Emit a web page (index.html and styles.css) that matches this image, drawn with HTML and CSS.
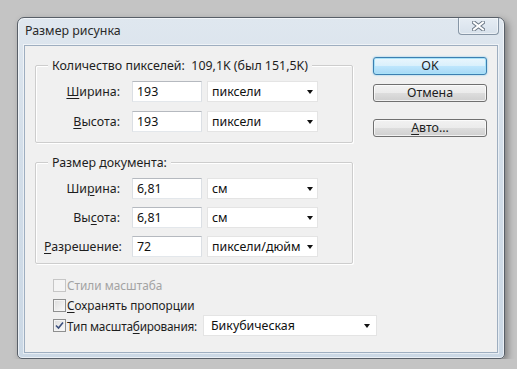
FILE: index.html
```html
<!DOCTYPE html>
<html lang="ru">
<head>
    <meta charset="UTF-8">
    <title>Размер рисунка</title>
    <link rel="stylesheet" href="styles.css">
</head>
<body>

<div class="desktop">
    <div class="window">
        <div class="titlebar">
            <span class="title">Размер рисунка</span>
            <span class="close">
                <svg width="13" height="10" viewBox="0 0 13 10">
                    <path d="M2 1.5 L11 8.5 M11 1.5 L2 8.5" stroke="#6b7886" stroke-width="4" stroke-linecap="square" fill="none"/>
                    <path d="M2 1.5 L11 8.5 M11 1.5 L2 8.5" stroke="#ffffff" stroke-width="2" stroke-linecap="square" fill="none"/>
                </svg>
            </span>
        </div>

        <div class="client">
            <div class="main">
                <div class="group">
                    <div class="group-title">Количество пикселей:&nbsp; 109,1K (был 151,5K)</div>
                    <div class="fields">
                        <span class="field-label"><u>Ш</u>ирина:</span>
                        <span class="input">193</span>
                        <span class="select">пиксели<span class="arrow"></span></span>

                        <span class="field-label"><u>В</u>ысота:</span>
                        <span class="input">193</span>
                        <span class="select">пиксели<span class="arrow"></span></span>
                    </div>
                </div>

                <div class="group group-doc">
                    <div class="group-title">Размер документа:</div>
                    <div class="fields">
                        <span class="field-label">Ши<u>р</u>ина:</span>
                        <span class="input">6,81</span>
                        <span class="select">см<span class="arrow"></span></span>

                        <span class="field-label">Вы<u>с</u>ота:</span>
                        <span class="input">6,81</span>
                        <span class="select">см<span class="arrow"></span></span>

                        <span class="field-label"><u>Р</u>азрешение:</span>
                        <span class="input">72</span>
                        <span class="select">пиксели/дюйм<span class="arrow"></span></span>
                    </div>
                </div>

                <div class="options">
                    <div class="option disabled">
                        <span class="check"></span>
                        <span>Стили масштаба</span>
                    </div>
                    <div class="option">
                        <span class="check"></span>
                        <span><u>С</u>охранять пропорции</span>
                    </div>
                    <div class="option">
                        <span class="check checked">
                            <svg width="9" height="9" viewBox="0 0 9 9">
                                <path d="M1 4.5 L3.5 7 L8 1.5" stroke="#3b4f7d" stroke-width="1.6" fill="none"/>
                            </svg>
                        </span>
                        <span class="option-label">Тип масшта<u>б</u>ирования:</span>
                        <span class="select select-wide">Бикубическая<span class="arrow"></span></span>
                    </div>
                </div>
            </div>

            <div class="buttons">
                <div class="btn btn-default">OK</div>
                <div class="btn">Отмена</div>
                <div class="btn btn-auto"><u>А</u>вто...</div>
            </div>
        </div>
    </div>
</div>

</body>
</html>
```

FILE: styles.css
```css
body {
    margin: 0;
    background: #c4c4c4;
    font-family: "Noto Sans", "Open Sans", sans-serif;
    font-size: 12.4px;
    color: #1e1e1e;
}
u {
    text-decoration-thickness: 1px;
    text-underline-offset: 2px;
}
.desktop {
    padding: 17px 0 0 17px;
}
.window {
    width: 488px;
    height: 342px;
    box-sizing: border-box;
    border: 1px solid #585f68;
    border-radius: 7px 7px 5px 5px;
    background: linear-gradient(#dfe7ef, #d3dee9 40%, #cbd8e5);
    box-shadow: inset 0 0 0 1px rgba(255, 255, 255, 0.6), 3px 3px 7px rgba(0, 0, 0, 0.35);
    padding: 0 6px 5px;
    display: flex;
    flex-direction: column;
}
.titlebar {
    height: 27px;
    flex-shrink: 0;
    display: flex;
    justify-content: space-between;
    align-items: flex-start;
}
.title {
    margin: 5px 0 0 1px;
    line-height: 16px;
    color: #2a2a2a;
}
.close {
    width: 41px;
    height: 17px;
    box-sizing: border-box;
    margin-right: -1px;
    border: 1px solid #8796a6;
    border-top: none;
    border-radius: 0 0 4px 4px;
    background: linear-gradient(#e6edf4, #d7e1eb);
    box-shadow: inset 0 0 0 1px rgba(255, 255, 255, 0.5);
    display: flex;
    align-items: center;
    justify-content: center;
}
.client {
    flex: 1;
    border: 1px solid #9eaec0;
    box-shadow: 0 0 0 1px rgba(255, 255, 255, 0.55);
    background: #f0f0f0;
    display: flex;
    gap: 20px;
    padding: 11px 10px 0;
}
.main {
    width: 318px;
    flex-shrink: 0;
    padding-top: 8px;
}
.group {
    border: 1px solid #cdcdcd;
    box-shadow: inset 1px 1px 0 #fff, 1px 1px 0 #fff;
    border-radius: 2px;
    padding: 0 0 10px 8px;
}
.group-doc {
    margin-top: 19px;
    padding-bottom: 6px;
}
.group-title {
    width: fit-content;
    margin: -8px 0 0 4px;
    padding: 0 4px;
    line-height: 16px;
    background: #f0f0f0;
}
.fields {
    display: grid;
    grid-template-columns: 83px 70px 111px;
    grid-auto-rows: 21px;
    column-gap: 5px;
    row-gap: 9px;
    margin-top: 7px;
    align-items: center;
}
.group-doc .fields {
    row-gap: 8px;
}
.field-label {
    text-align: right;
    padding-right: 7px;
}
.input {
    height: 21px;
    box-sizing: border-box;
    background: #fff;
    border: 1px solid;
    border-color: #b5b9bf #dbdfe4 #e3e7eb #dbdfe4;
    padding: 0 4px;
    line-height: 19px;
    color: #111;
}
.select {
    height: 21px;
    box-sizing: border-box;
    background: #fff;
    border: 1px solid #e4e4e4;
    padding: 0 4px 0 4px;
    line-height: 19px;
    display: flex;
    justify-content: space-between;
    align-items: center;
    color: #111;
}
.arrow {
    width: 0;
    height: 0;
    border-left: 3.5px solid transparent;
    border-right: 3.5px solid transparent;
    border-top: 4px solid #111;
}
.options {
    margin-top: 11px;
    padding-left: 18px;
    font-size: 11.8px;
}
.option {
    height: 20px;
    display: flex;
    align-items: center;
    white-space: nowrap;
}
.option:last-child {
    height: 21px;
}
.option-label {
    width: 136px;
    flex-shrink: 0;
    letter-spacing: -0.2px;
}
.check {
    width: 13px;
    height: 13px;
    flex-shrink: 0;
    box-sizing: border-box;
    border: 1px solid #8e8f8f;
    background: linear-gradient(135deg, #dcdcdc, #fbfbfb);
    box-shadow: inset 0 0 0 1px #f4f4f4;
    margin-right: 1px;
    display: flex;
    align-items: center;
    justify-content: center;
}
.disabled {
    color: #a3a3a3;
}
.disabled .check {
    border-color: #c6c6c6;
    background: #f4f4f4;
}
.select-wide {
    width: 174px;
    flex-shrink: 0;
    font-size: 12.4px;
    padding: 0 6px 0 7px;
}
.buttons {
    width: 114px;
    display: flex;
    flex-direction: column;
}
.btn {
    height: 18px;
    box-sizing: border-box;
    border: 1px solid #707070;
    border-radius: 3px;
    background: linear-gradient(#f2f2f2 0, #ebebeb 50%, #dddddd 51%, #cfcfcf 100%);
    box-shadow: inset 0 0 0 1px rgba(255, 255, 255, 0.7);
    text-align: center;
    line-height: 16px;
    margin-bottom: 9px;
}
.btn-default {
    border-color: #3c7fb1;
    background: linear-gradient(#eaf6fd 0, #d9f0fc 50%, #bee6fd 51%, #a7d9f5 100%);
    box-shadow: inset 0 0 0 1px #a8e2f8, 0 0 2px #6fc3ea;
}
.btn-auto {
    margin-top: 8px;
}
```
